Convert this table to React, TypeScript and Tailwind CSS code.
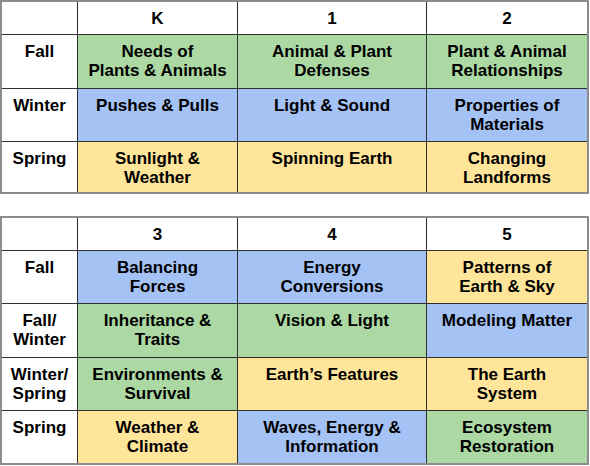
import { Fragment } from "react";

type Cell = { text: string; color: "g" | "b" | "y" };
type Row = { label: string; cells: Cell[] };

const colorClass = {
    g: "bg-[#abd8a3]",
    b: "bg-[#a4c2f4]",
    y: "bg-[#ffe599]",
};

const topRows: Row[] = [
    {
        label: "Fall",
        cells: [
            { text: "Needs of\nPlants & Animals", color: "g" },
            { text: "Animal & Plant\nDefenses", color: "g" },
            { text: "Plant & Animal\nRelationships", color: "g" },
        ],
    },
    {
        label: "Winter",
        cells: [
            { text: "Pushes & Pulls", color: "b" },
            { text: "Light & Sound", color: "b" },
            { text: "Properties of\nMaterials", color: "b" },
        ],
    },
    {
        label: "Spring",
        cells: [
            { text: "Sunlight &\nWeather", color: "y" },
            { text: "Spinning Earth", color: "y" },
            { text: "Changing\nLandforms", color: "y" },
        ],
    },
];

const bottomRows: Row[] = [
    {
        label: "Fall",
        cells: [
            { text: "Balancing\nForces", color: "b" },
            { text: "Energy\nConversions", color: "b" },
            { text: "Patterns of\nEarth & Sky", color: "y" },
        ],
    },
    {
        label: "Fall/\nWinter",
        cells: [
            { text: "Inheritance &\nTraits", color: "g" },
            { text: "Vision & Light", color: "g" },
            { text: "Modeling Matter", color: "b" },
        ],
    },
    {
        label: "Winter/\nSpring",
        cells: [
            { text: "Environments &\nSurvival", color: "g" },
            { text: "Earth’s Features", color: "y" },
            { text: "The Earth\nSystem", color: "y" },
        ],
    },
    {
        label: "Spring",
        cells: [
            { text: "Weather &\nClimate", color: "y" },
            { text: "Waves, Energy &\nInformation", color: "b" },
            { text: "Ecosystem\nRestoration", color: "g" },
        ],
    },
];

const cellBase = "pt-[7px] text-center whitespace-pre-line";

const GradeTable = ({ grades, rows, rowsClass }: { grades: string[]; rows: Row[]; rowsClass: string }) => {
    return (
        <div className="w-[589px] border-2 border-[#8c8c8c]">
            <div className={`grid grid-cols-[75px_159px_188px_160px] ${rowsClass} gap-px bg-[#2e2e2e]`}>
                <div className={`${cellBase} bg-white`}></div>
                {grades.map((g) => (
                    <div key={g} className={`${cellBase} bg-white`}>
                        {g}
                    </div>
                ))}
                {rows.map((row) => (
                    <Fragment key={row.label}>
                        <div className={`${cellBase} bg-white`}>{row.label}</div>
                        {row.cells.map((cell, i) => (
                            <div key={`${row.label}_${i}`} className={`${cellBase} ${colorClass[cell.color]}`}>
                                {cell.text}
                            </div>
                        ))}
                    </Fragment>
                ))}
            </div>
        </div>
    );
};

const App = () => {
    return (
        <div className="w-[590px] h-[466px] bg-white font-['Liberation_Sans',Arial,sans-serif] font-bold text-[17px] leading-[19px] text-black">
            <GradeTable grades={["K", "1", "2"]} rows={topRows} rowsClass="grid-rows-[32px_53px_52px_50px]" />
            <div className="mt-[22px]">
                <GradeTable grades={["3", "4", "5"]} rows={bottomRows} rowsClass="grid-rows-[32px_52px_53px_52px_52px]" />
            </div>
        </div>
    );
};

export default App;
